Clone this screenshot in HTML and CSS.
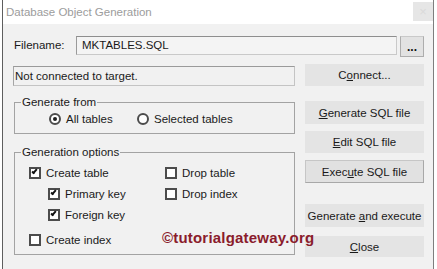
FILE: index.html
```html
<!DOCTYPE html>
<html lang="en">
<head>
    <meta charset="UTF-8">
    <title>Database Object Generation</title>
    <link rel="stylesheet" href="styles.css">
</head>
<body>
    <main class="window">
        <header class="titlebar">
            <span class="title">Database Object Generation</span>
            <span class="close-btn">&times;</span>
        </header>
        <section class="content">
            <div class="file-row">
                <label class="file-label">Filename:</label>
                <div class="file-input">MKTABLES.SQL</div>
                <button class="dots-btn">...</button>
            </div>
            <div class="main">
                <div class="left">
                    <div class="status">Not connected to target.</div>
                    <div class="group group-from">
                        <span class="legend">Generate from</span>
                        <div class="radio-row">
                            <span class="option first">
                                <span class="radio checked"></span>All tables
                            </span>
                            <span class="option">
                                <span class="radio"></span>Selected tables
                            </span>
                        </div>
                    </div>
                    <div class="group group-options">
                        <span class="legend">Generation options</span>
                        <div class="options-grid">
                            <div class="col col-1">
                                <span class="check-item"><span class="check on"></span>Create table</span>
                                <span class="check-item indent"><span class="check on"></span>Primary key</span>
                                <span class="check-item indent"><span class="check on"></span>Foreign key</span>
                                <span class="check-item spaced"><span class="check"></span>Create index</span>
                            </div>
                            <div class="col col-2">
                                <span class="check-item"><span class="check"></span>Drop table</span>
                                <span class="check-item"><span class="check"></span>Drop index</span>
                            </div>
                        </div>
                    </div>
                </div>
                <div class="right">
                    <button class="btn btn-connect">C<u>o</u>nnect...</button>
                    <button class="btn btn-generate"><u>G</u>enerate SQL file</button>
                    <button class="btn btn-edit"><u>E</u>dit SQL file</button>
                    <button class="btn btn-execute default">Exec<u>u</u>te SQL file</button>
                    <button class="btn btn-genexec">Generate <u>a</u>nd execute</button>
                    <button class="btn btn-close"><u>C</u>lose</button>
                </div>
            </div>
        </section>
        <span class="watermark">&copy;tutorialgateway.org</span>
    </main>
</body>
</html>
```

FILE: styles.css
```css
:root{
    --body-bg: #f1f1f1;
    --border: #a3a3a3;
    --text: #1a1a1a;
    --btn-bg: #e4e4e4;
}
*,*::before,*::after{
    box-sizing: border-box;
    margin: 0;
    padding: 0;
}
body{
    background-color: #fff;
    font-family: "Liberation Sans", Arial, sans-serif;
    font-size: 11.5px;
    color: var(--text);
}
.window{
    position: relative;
    margin-left: 2px;
    width: 432px;
    height: 269px;
    border-left: 1px solid #5e5e5e;
    border-right: 1px solid #7e7e7e;
    background-color: var(--body-bg);
    overflow: hidden;
}
.titlebar{
    height: 24px;
    background-color: #fff;
    display: flex;
    justify-content: space-between;
    align-items: flex-start;
    padding-left: 3px;
}
.title{
    color: #9c9c9c;
    font-size: 11.5px;
    line-height: 24px;
}
.close-btn{
    margin-top: 2px;
    width: 20px;
    height: 19px;
    background-color: #e6e6e6;
    color: #dadada;
    font-size: 13px;
    line-height: 19px;
    text-align: center;
}
.content{
    padding: 12px 0 0 10px;
}
.file-row{
    display: flex;
    align-items: flex-start;
    height: 21px;
}
.file-label{
    width: 62px;
    margin-left: 1px;
    line-height: 19px;
}
.file-input{
    width: 321px;
    height: 19px;
    padding-left: 5px;
    line-height: 17px;
    border: 1px solid #c9c9c9;
    border-top-color: #8e8e8e;
    border-left-color: #9a9a9a;
    background-color: #f4f4f4;
}
.dots-btn{
    margin-left: 3px;
    width: 24px;
    height: 21px;
    background-color: #e2e2e2;
    border: 1px solid #adadad;
    border-top-color: #c9c9c9;
    font-family: inherit;
    font-size: 12px;
    font-weight: 700;
    line-height: 14px;
    color: #111;
}
.main{
    margin-top: 7px;
    display: grid;
    grid-template-columns: 282px 119px;
    column-gap: 10px;
}
.status{
    margin-top: 2px;
    height: 20px;
    padding-left: 1px;
    line-height: 18px;
    border: 1px solid #c4c4c4;
    border-top-color: #9a9a9a;
    border-left-color: #a5a5a5;
}
.group{
    margin-left: 1px;
    border: 1px solid var(--border);
}
.legend{
    display: block;
    width: fit-content;
    margin: -7px 0 0 6px;
    padding: 0 1px;
    line-height: 13px;
    background-color: var(--body-bg);
}
.group-from{
    margin-top: 16px;
    padding-bottom: 8px;
}
.radio-row{
    display: flex;
    margin-top: 4px;
    padding-left: 34px;
    height: 12px;
}
.option{
    display: flex;
    align-items: center;
    gap: 5px;
    line-height: 12px;
}
.option.first{
    width: 88px;
}
.radio{
    position: relative;
    width: 12px;
    height: 12px;
    border: 2px solid #4c4c4c;
    border-radius: 50%;
    background-color: #fff;
}
.radio.checked::after{
    content: "";
    position: absolute;
    left: 2px;
    top: 2px;
    width: 4px;
    height: 4px;
    border-radius: 50%;
    background-color: #1e1e1e;
}
.group-options{
    margin-top: 18px;
    padding-bottom: 8px;
}
.options-grid{
    display: grid;
    grid-template-columns: 136px 1fr;
    margin-top: 8px;
    padding-left: 14px;
}
.col{
    display: flex;
    flex-direction: column;
    gap: 9px;
}
.check-item{
    display: flex;
    align-items: center;
    gap: 5px;
    height: 12px;
    line-height: 12px;
}
.check-item.indent{
    margin-left: 19px;
}
.check-item.spaced{
    margin-top: 4px;
}
.check{
    position: relative;
    flex: none;
    width: 12px;
    height: 12px;
    border: 2px solid #4c4c4c;
    background-color: #fff;
}
.check.on::after{
    content: "";
    position: absolute;
    left: 2px;
    top: -1px;
    width: 3px;
    height: 6px;
    border: solid #111;
    border-width: 0 2px 2px 0;
    transform: rotate(40deg);
}
.right{
    display: flex;
    flex-direction: column;
}
.btn{
    height: 22px;
    border: none;
    background-color: var(--btn-bg);
    font-family: inherit;
    font-size: 11.5px;
    color: var(--text);
    text-align: center;
}
.btn.default{
    background-color: #e1e1e1;
    border: 1px solid #a8a8a8;
    border-top-color: #c6c6c6;
    border-left-color: #c6c6c6;
    height: 23px;
}
.btn-generate{
    margin-top: 15px;
    height: 23px;
}
.btn-edit{
    margin-top: 7px;
}
.btn-execute{
    margin-top: 7px;
}
.btn-genexec{
    margin-top: 21px;
    height: 23px;
}
.btn-close{
    margin-top: 9px;
    height: 21px;
}
.watermark{
    position: absolute;
    left: 159px;
    top: 229px;
    font-size: 15px;
    font-weight: 700;
    color: #8a1c2c;
    letter-spacing: 0.2px;
}
```
